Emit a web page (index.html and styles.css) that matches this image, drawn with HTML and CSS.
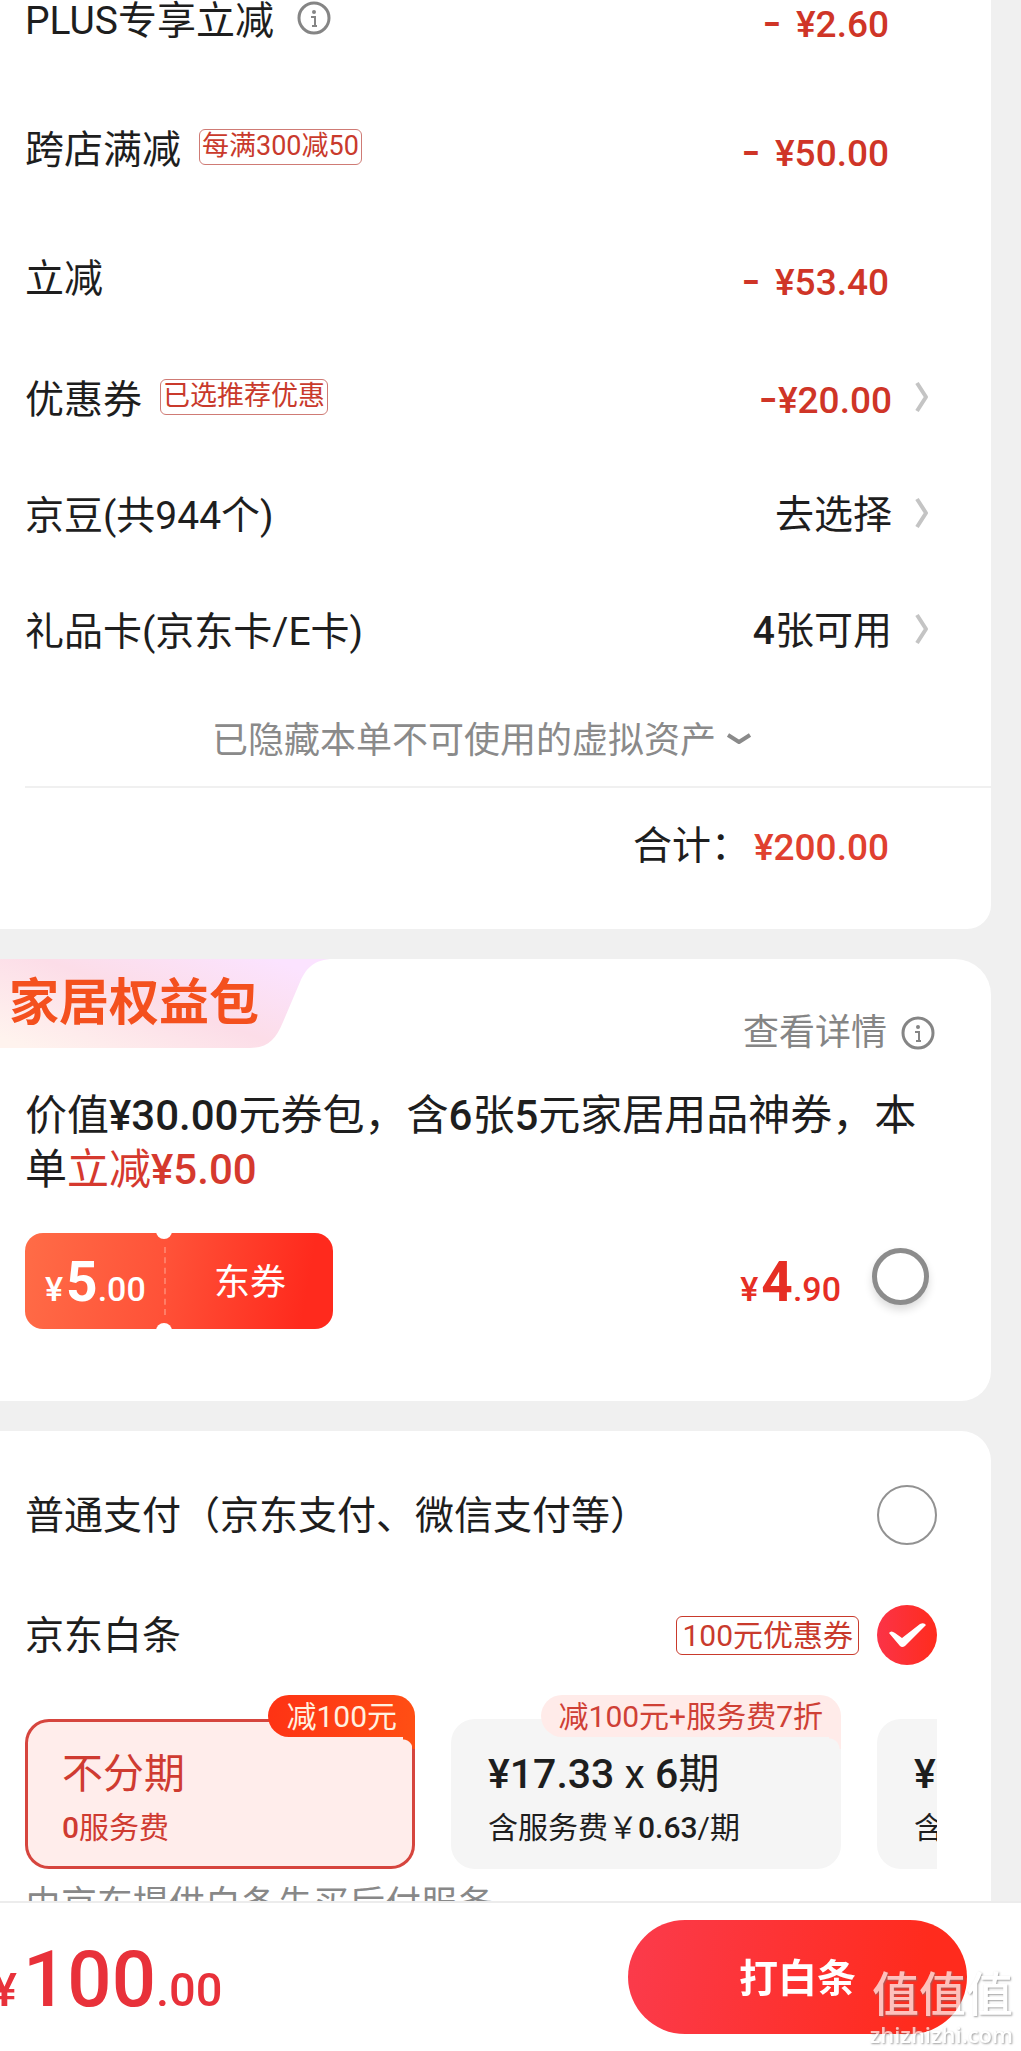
FILE: index.html
```html
<!DOCTYPE html>
<html lang="zh-CN">
<head>
<meta charset="utf-8">
<meta name="viewport" content="width=device-width, initial-scale=1">
<title>确认订单</title>
<link rel="stylesheet" href="styles.css">
</head>
<body>
<svg class="sprite" aria-hidden="true">
  <symbol id="info" viewBox="0 0 34 34">
    <circle cx="17" cy="17" r="15" fill="none" stroke="currentColor" stroke-width="3"/>
    <circle cx="17" cy="11" r="2" fill="currentColor"/>
    <path d="M14 16h4v9M15 25h5" fill="none" stroke="currentColor" stroke-width="2"/>
  </symbol>
  <symbol id="chevron" viewBox="0 0 14 32">
    <path d="M2 2L11 16L2 30" fill="none" stroke="currentColor" stroke-width="4" stroke-linejoin="round"/>
  </symbol>
  <symbol id="down" viewBox="0 0 26 12">
    <path d="M2 2L13 9L24 2" fill="none" stroke="currentColor" stroke-width="4" stroke-linejoin="round"/>
  </symbol>
</svg>

<main class="page">
  <section class="card summary">
    <div class="discounts">
      <div class="row">
        <span class="label">PLUS专享立减</span>
        <svg class="icon-info"><use href="#info"/></svg>
        <span class="amount"><span class="minus minus-spaced">-</span> ¥2.60</span>
      </div>
      <div class="row">
        <span class="label">跨店满减</span>
        <span class="tag">每满300减50</span>
        <span class="amount"><span class="minus minus-spaced">-</span> ¥50.00</span>
      </div>
      <div class="row">
        <span class="label">立减</span>
        <span class="amount"><span class="minus minus-spaced">-</span> ¥53.40</span>
      </div>
    </div>
    <div class="assets">
      <a class="row" href="#coupons">
        <span class="label">优惠券</span>
        <span class="tag">已选推荐优惠</span>
        <span class="amount"><span class="minus">-</span>¥20.00</span>
        <svg class="icon-chevron"><use href="#chevron"/></svg>
      </a>
      <a class="row" href="#beans">
        <span class="label">京豆(共944个)</span>
        <span class="choice">去选择</span>
        <svg class="icon-chevron"><use href="#chevron"/></svg>
      </a>
      <a class="row" href="#cards">
        <span class="label">礼品卡(京东卡/E卡)</span>
        <span class="choice"><b>4</b>张可用</span>
        <svg class="icon-chevron"><use href="#chevron"/></svg>
      </a>
    </div>
    <button class="hidden-note" type="button">已隐藏本单不可使用的虚拟资产<svg class="icon-down"><use href="#down"/></svg></button>
    <div class="total"><span>合计：</span><span class="total-price">¥200.00</span></div>
  </section>

  <section class="card pack">
    <header class="pack-head">
      <h2 class="banner">家居权益包</h2>
      <a class="detail" href="#detail">查看详情<svg class="icon-info"><use href="#info"/></svg></a>
    </header>
    <p class="pack-text">价值<b>¥30.00</b>元券包，含<b>6</b>张<b>5</b>元家居用品神券，本单<span class="red">立减<b>¥5.00</b></span></p>
    <div class="pack-row">
      <div class="coupon">
        <span class="coupon-value price">¥<strong>5</strong>.00</span>
        <span class="coupon-name">东券</span>
      </div>
      <label class="pack-price price" for="pack">¥<strong>4</strong>.90</label>
      <input class="radio radio-thick" type="checkbox" id="pack">
    </div>
  </section>

  <section class="card pay">
    <div class="pay-row">
      <label class="label" for="pay-normal">普通支付（京东支付、微信支付等）</label>
      <input class="radio" type="radio" name="pay" id="pay-normal">
    </div>
    <div class="pay-row">
      <label class="label" for="pay-credit">京东白条</label>
      <span class="tag tag-large">100元优惠券</span>
      <input class="radio" type="radio" name="pay" id="pay-credit" checked>
    </div>
    <div class="plans">
      <button class="plan plan-active" type="button">
        <span class="badge badge-solid">减100元</span>
        <span class="plan-title">不分期</span>
        <span class="plan-fee"><b>0</b>服务费</span>
      </button>
      <button class="plan" type="button">
        <span class="badge">减100元+服务费7折</span>
        <span class="plan-title"><b>¥17.33</b> x <b>6</b>期</span>
        <span class="plan-fee">含服务费￥<b>0.63</b>/期</span>
      </button>
      <button class="plan" type="button">
        <span class="plan-title"><b>¥</b></span>
        <span class="plan-fee">含</span>
      </button>
    </div>
    <p class="provider">由京东提供白条先买后付服务</p>
  </section>
</main>

<footer class="bar">
  <span class="bar-price">¥<strong>100</strong>.00</span>
  <button class="submit" type="button">打白条</button>
  <div class="watermark"><span class="mark-name">值值值</span><span class="mark-site">zhizhizhi.com</span></div>
</footer>
</body>
</html>
```

FILE: styles.css
```css
* { box-sizing: border-box; }

body {
  margin: 0;
  background: #f0f0f0;
  color: #1e1e1e;
  font-family: Roboto, "Noto Sans CJK SC", sans-serif;
  font-size: 39px;
  line-height: 40px;
}

a { color: inherit; text-decoration: none; }
button { font: inherit; color: inherit; border: 0; background: none; padding: 0; }
b, strong { font-weight: 500; }
h2, p { margin: 0; }
.sprite { position: absolute; width: 0; height: 0; }

.page {
  display: flex;
  flex-direction: column;
  gap: 30px;
  min-height: 100vh;
  padding-right: 30px;
}

.card { background: #fff; }

/* price summary */
.summary {
  padding-bottom: 61px;
  border-radius: 0 0 24px 0;
}
.discounts { display: grid; gap: 89px; padding: 0 102px 0 25px; }
.assets { display: grid; gap: 76px; margin-top: 81px; padding: 0 62px 0 25px; }
.row { display: flex; align-items: center; height: 40px; }
.label { padding-top: 2px; white-space: nowrap; }
.amount, .choice { margin-left: auto; white-space: nowrap; }
.amount, .total-price { color: #cf3527; font-size: 37px; font-weight: 500; }
.discounts .amount { padding-top: 6px; }
.minus { font-family: Inter, sans-serif; font-size: 42px; line-height: 1; }
.minus-spaced { margin-right: 5px; }

.icon-info { flex: none; width: 34px; height: 34px; color: #858585; }
.discounts .icon-info { margin: 0 0 4px 23px; }
.icon-chevron { flex: none; width: 14px; height: 32px; margin: 0 0 4px 23px; color: #c4c4c4; }
.icon-down { width: 26px; height: 12px; margin: 0 0 4px 10px; }

.tag {
  height: 36px;
  margin: 0 0 4px 18px;
  padding: 0 2px;
  border: 1px solid #cf7b75;
  border-radius: 6px;
  color: #c93a2c;
  font-size: 27px;
  line-height: 32px;
  white-space: nowrap;
}

.hidden-note {
  display: flex;
  align-items: center;
  justify-content: center;
  width: 100%;
  margin-top: 70px;
  padding-right: 27px;
  color: #8a8a8a;
  font-size: 36px;
}

.total {
  display: flex;
  align-items: center;
  justify-content: flex-end;
  gap: 4px;
  margin: 25px 0 0 25px;
  padding: 36px 102px 0 0;
  border-top: 2px solid #f0f0f0;
}
.total-price { padding-top: 4px; color: #e0402f; }

/* benefit pack */
.pack {
  padding-bottom: 72px;
  border-radius: 0 36px 30px 0;
}
.pack-head { display: flex; justify-content: space-between; padding-right: 56px; }
.banner {
  width: 330px;
  height: 89px;
  padding-left: 9px;
  background: linear-gradient(200deg, #fbe3ff 10%, #fcdde8 50%, #fff3ee 95%);
  clip-path: path("M0 0H330C312 2 306 10 300 23L283 63C276 80 268 89 250 89H0Z");
  color: #f4501e;
  font-size: 50px;
  font-weight: 700;
  line-height: 88px;
}
.detail {
  display: flex;
  align-items: center;
  gap: 14px;
  height: 40px;
  margin-top: 54px;
  color: #858585;
  font-size: 36px;
}
.pack-text {
  margin-top: 36px;
  padding: 0 57px 0 25px;
  font-size: 42px;
  line-height: 54px;
}
.red { color: #d5392e; }
.pack-row {
  display: flex;
  align-items: center;
  margin-top: 36px;
  padding: 0 62px 0 25px;
}
.price { font-size: 34px; line-height: 56px; white-space: nowrap; }
.price strong { margin: 0 0 0 3px; font-size: 55px; font-weight: 700; }
.coupon {
  position: relative;
  display: grid;
  grid-template-columns: 139px 169px;
  align-items: center;
  height: 96px;
  border-radius: 18px;
  background: linear-gradient(100deg, #ff6c47, #ff5238 45%, #ff2a1d 90%);
  color: #fff;
}
.coupon::before, .coupon::after {
  content: "";
  position: absolute;
  left: 131px;
  width: 16px;
  height: 16px;
  border-radius: 50%;
  background: #fff;
}
.coupon::before { top: -10px; }
.coupon::after { bottom: -10px; }
.coupon-value { padding: 8px 0 0 20px; font-weight: 500; }
.coupon-name {
  height: 68px;
  border-left: 2px dashed #ff7d66;
  font-size: 36px;
  line-height: 72px;
  padding-left: 48px;
}
.pack-price { margin-left: auto; padding-top: 8px; color: #e62e24; font-weight: 500; }

.radio {
  appearance: none;
  flex: none;
  width: 60px;
  height: 60px;
  margin: 0 0 0 18px;
  border: 2px solid #929292;
  border-radius: 50%;
  background: #fff;
}
.radio-thick {
  width: 57px;
  height: 57px;
  margin: 0 0 10px 31px;
  border: 5px solid #8c8c8c;
  box-shadow: 0 5px 8px #dcdcdc;
}
.radio:checked {
  border: 0;
  background: url("data:image/svg+xml,%3Csvg xmlns='http://www.w3.org/2000/svg' viewBox='0 0 60 60'%3E%3Cpath d='M12 28Q14 25 18 28L25 33L43 19Q47 17 49 20L28 41Q25 43 23 41Z' fill='%23fff'/%3E%3C/svg%3E"), linear-gradient(90deg, #fb3347, #ff2c1d);
}

/* payment */
.pay {
  flex: 1;
  padding: 54px 54px 0 25px;
  border-radius: 0 30px 0 0;
}
.pay-row { display: flex; align-items: center; height: 60px; }
.pay-row + .pay-row { margin-top: 60px; }
.pay-row .label { margin-right: auto; }
.tag-large {
  height: 39px;
  margin: 0;
  padding: 0 5px;
  border-color: #c93a2c;
  font-size: 30px;
  line-height: 37px;
}
.plans {
  display: flex;
  gap: 36px;
  overflow: hidden;
  margin-top: 30px;
  padding-top: 24px;
}
.plan {
  position: relative;
  display: flex;
  flex: none;
  flex-direction: column;
  align-items: flex-start;
  justify-content: center;
  gap: 14px;
  width: 390px;
  height: 150px;
  padding: 14px 0 0 37px;
  border-radius: 24px;
  background: #f5f5f5;
  white-space: nowrap;
}
.plan-active { background: #ffedeb; color: #cf3b31; box-shadow: inset 0 0 0 3px #d6453e; }
.plan-title { font-size: 41px; }
.plan-fee { font-size: 30px; }
.badge {
  position: absolute;
  right: 0;
  top: -24px;
  padding: 2px 18px 0;
  border-radius: 21px 21px 0 21px;
  background: #ffebe9;
  color: #cf4035;
  font-size: 30px;
  line-height: 40px;
}
.badge::after {
  content: "";
  position: absolute;
  right: 0;
  top: 42px;
  width: 12px;
  height: 12px;
  background: radial-gradient(circle at 0 100%, transparent 10px, #ffebe9 11px);
}
.badge-solid { background: linear-gradient(100deg, #fe3214, #ff4f14); color: #fff1e0; }
.badge-solid::after { background: radial-gradient(circle at 0 100%, transparent 9px, #ff4f14 10px); }
.provider { margin-top: 16px; color: #888; font-size: 36px; }

/* bottom bar */
.bar {
  position: fixed;
  right: 0;
  bottom: 0;
  left: 0;
  display: flex;
  align-items: center;
  justify-content: space-between;
  height: 150px;
  padding-right: 54px;
  border-top: 2px solid #ececec;
  background: #fff;
}
.bar-price {
  margin-left: -8px;
  padding-top: 16px;
  color: #e8313a;
  font-size: 47px;
  font-weight: 500;
  line-height: 88px;
}
.bar-price strong { margin: 0 0 0 6px; font-size: 78px; }
.submit {
  width: 339px;
  height: 114px;
  padding-top: 4px;
  border-radius: 57px;
  background: linear-gradient(100deg, #fb3b4c, #ff2b1d 85%);
  color: #fff;
  font-weight: 700;
}
.watermark {
  position: absolute;
  right: 8px;
  bottom: 4px;
  display: flex;
  flex-direction: column;
  align-items: flex-end;
  color: #fff;
  opacity: 0.7;
  text-shadow: 1px 1px 2px #777;
  white-space: nowrap;
}
.mark-name { font-size: 47px; font-weight: 500; line-height: 52px; }
.mark-site { font-family: "Open Sans", sans-serif; font-size: 22px; font-weight: 600; line-height: 26px; }
```
